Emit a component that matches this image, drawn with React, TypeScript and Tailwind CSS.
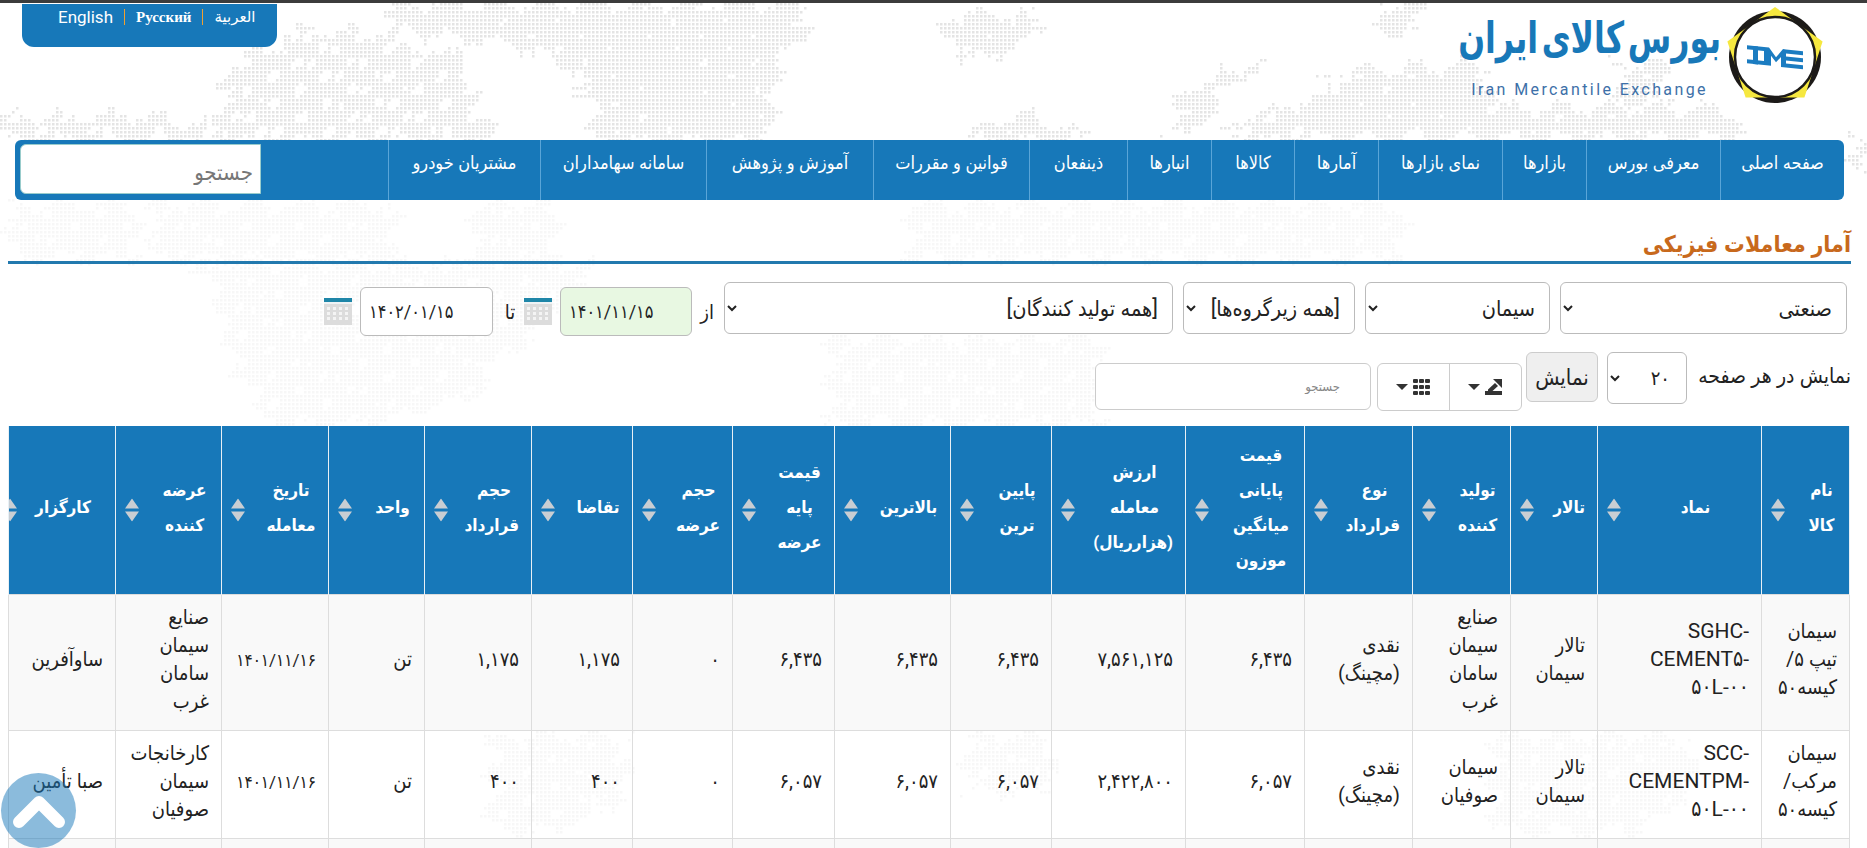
import { ReactNode } from "react"

const navItems = [
  { label: "صفحه اصلی", w: "w-[124px]" },
  { label: "معرفی بورس", w: "w-[134px]" },
  { label: "بازارها", w: "w-[84px]" },
  { label: "نمای بازارها", w: "w-[124px]" },
  { label: "آمارها", w: "w-[84px]" },
  { label: "کالاها", w: "w-[83px]" },
  { label: "انبارها", w: "w-[84px]" },
  { label: "ذینفعان", w: "w-[98px]" },
  { label: "قوانین و مقررات", w: "w-[156px]" },
  { label: "آموزش و پژوهش", w: "w-[167px]" },
  { label: "سامانه سهامداران", w: "w-[166px]" },
  { label: "مشتریان خودرو", w: "w-[152px]" },
]

const columns: { title: ReactNode; w: string; sortPos?: string; pr?: string }[] = [
  { title: <>نام<br />کالا</>, w: "w-[88px]" },
  { title: "نماد", w: "w-[164px]" },
  { title: "تالار", w: "w-[87px]" },
  { title: <>تولید<br />کننده</>, w: "w-[98px]" },
  { title: <>نوع<br />قرارداد</>, w: "w-[108px]" },
  { title: <>قیمت<br />پایانی<br />میانگین<br />موزون</>, w: "w-[119px]" },
  { title: <>ارزش<br />معامله<br />(هزارریال)</>, w: "w-[134px]" },
  { title: <>پایین<br />ترین</>, w: "w-[101px]" },
  { title: "بالاترین", w: "w-[116px]" },
  { title: <>قیمت<br />پایه<br />عرضه</>, w: "w-[102px]" },
  { title: <>حجم<br />عرضه</>, w: "w-[100px]" },
  { title: "تقاضا", w: "w-[101px]" },
  { title: <>حجم<br />قرارداد</>, w: "w-[107px]" },
  { title: "واحد", w: "w-[96px]" },
  { title: <>تاریخ<br />معامله</>, w: "w-[107px]" },
  { title: <>عرضه<br />کننده</>, w: "w-[106px]" },
  { title: "کارگزار", w: "w-[107px]", sortPos: "left-[-6px]", pr: "pr-[24px]" },
]

const Latin = ({ lines }: { lines: string[] }) => (
  <>
    {lines.map((l) => (
      <div key={l} dir="ltr" className="text-right text-[21px]">{l}</div>
    ))}
  </>
)

const Num = ({ v }: { v: string }) => <span className="text-[20px] tracking-[0.5px]">{v}</span>
const Dt = ({ v }: { v: string }) => <span className="text-[17px]">{v}</span>

const rows: ReactNode[][] = [
  [
    <>سیمان<br />تیپ ۵/<br />کیسه۵۰</>,
    <Latin lines={["SGHC-", "CEMENT۵-", "۵۰L-۰۰"]} />,
    <>تالار<br />سیمان</>,
    <>صنایع<br />سیمان<br />سامان<br />غرب</>,
    <>نقدی<br />(مچینگ)</>,
    <Num v="۶,۴۳۵" />, <Num v="۷,۵۶۱,۱۲۵" />, <Num v="۶,۴۳۵" />, <Num v="۶,۴۳۵" />, <Num v="۶,۴۳۵" />,
    <Num v="۰" />, <Num v="۱,۱۷۵" />, <Num v="۱,۱۷۵" />, "تن", <Dt v="۱۴۰۱/۱۱/۱۶" />,
    <>صنایع<br />سیمان<br />سامان<br />غرب</>,
    "ساوآفرین",
  ],
  [
    <>سیمان<br />مرکب/<br />کیسه۵۰</>,
    <Latin lines={["SCC-", "CEMENTPM-", "۵۰L-۰۰"]} />,
    <>تالار<br />سیمان</>,
    <>سیمان<br />صوفیان</>,
    <>نقدی<br />(مچینگ)</>,
    <Num v="۶,۰۵۷" />, <Num v="۲,۴۲۲,۸۰۰" />, <Num v="۶,۰۵۷" />, <Num v="۶,۰۵۷" />, <Num v="۶,۰۵۷" />,
    <Num v="۰" />, <Num v="۴۰۰" />, <Num v="۴۰۰" />, "تن", <Dt v="۱۴۰۱/۱۱/۱۶" />,
    <>کارخانجات<br />سیمان<br />صوفیان</>,
    "صبا تأمین",
  ],
]

type Pt = [number, number]

const inPoly = (x: number, y: number, poly: Pt[]) => {
  let inside = false
  for (let i = 0, j = poly.length - 1; i < poly.length; j = i++) {
    const [xi, yi] = poly[i]
    const [xj, yj] = poly[j]
    if (yi > y !== yj > y && x < ((xj - xi) * (y - yi)) / (yj - yi) + xi) inside = !inside
  }
  return inside
}

// dotted continents: jitter the test point so the edges come out rough
const dotPath = (polys: Pt[][], holes: number) => {
  let d = ""
  for (let y = 3; y < 848; y += 4) {
    for (let x = 0; x < 1867; x += 4) {
      const jx = x + 9 * Math.sin(y * 0.17 + x * 0.03) + 4 * Math.sin(y * 0.61)
      const jy = y + 7 * Math.sin(x * 0.13) + 3 * Math.sin(x * 0.47)
      if (!polys.some((p) => inPoly(jx, jy, p))) continue
      const n = Math.sin(x * 0.11) * Math.sin(y * 0.23) + Math.sin(x * 0.37 + y * 0.19) * 0.5
      if (n > holes) continue
      d += `M${x} ${y}h2.5v2.500h-2.500z`
    }
  }
  return d
}

const denseMap = dotPath(
  [
    [[388, 3], [812, 3], [790, 50], [775, 70], [768, 140], [595, 140], [587, 90], [562, 62], [500, 40], [400, 30]],
    [[943, 13], [1035, 13], [1035, 25], [1000, 57], [970, 57], [943, 35]],
    [[1250, 57], [1260, 60], [1190, 133], [1167, 133], [1185, 90]],
    [[1375, 3], [1425, 3], [1416, 33], [1385, 33]],
    [[976, 125], [1020, 113], [1076, 130], [1076, 140], [976, 140]],
    [[1343, 70], [1488, 63], [1488, 107], [1734, 107], [1734, 137], [1300, 137], [1300, 107]],
    [[1618, 63], [1662, 63], [1662, 100], [1618, 100]],
    [[1850, 140], [1867, 140], [1867, 170], [1850, 170]],
  ],
  1.2
)

const sparseMap = dotPath(
  [
    [[300, 30], [388, 30], [388, 47], [460, 50], [490, 140], [214, 140], [228, 60]],
    [[9, 115], [134, 115], [214, 125], [214, 140], [0, 140], [0, 125]],
    [[1240, 120], [1300, 100], [1300, 140], [1230, 140]],
  ],
  0.6
)

const faintMap = dotPath(
  [
    [[9, 203], [134, 203], [134, 257], [9, 257]],
    [[152, 203], [393, 203], [393, 257], [152, 257]],
    [[473, 203], [553, 203], [553, 263], [473, 263]],
    [[196, 262], [590, 262], [590, 290], [500, 357], [473, 393], [375, 423], [268, 423], [232, 357], [214, 290]],
    [[910, 203], [1400, 203], [1400, 257], [910, 257]],
    [[830, 337], [1098, 337], [1098, 423], [830, 423]],
    [[490, 735], [624, 735], [624, 790], [560, 830], [490, 830]],
    [[966, 735], [1050, 735], [1050, 790], [966, 790]],
    [[1493, 735], [1692, 735], [1692, 780], [1640, 830], [1493, 830]],
  ],
  0.8
)

const WorldMap = () => (
  <svg className="absolute left-0 top-0" width="1867" height="848" aria-hidden="true">
    <path d={denseMap} fill="#e4e4e4" />
    <path d={sparseMap} fill="#e4e4e4" />
    <path d={faintMap} fill="#f7f7f7" />
  </svg>
)

const Logo = () => (
  <svg width="100" height="100" viewBox="0 0 100 100" className="shrink-0" aria-hidden="true">
    <circle cx="50" cy="50" r="46" fill="#1c1a18" />
    <polygon points="50,0 97.600,34.500 79.400,90.500 20.600,90.500 2.400,34.500" fill="#f6e83f" />
    <circle cx="50" cy="50" r="40" fill="#fff" stroke="#1c1a18" strokeWidth="2.500" />
    <g fill="#1b7cc1" transform="skewY(6) translate(0 -5)">
      <rect x="22" y="41" width="17" height="4" />
      <rect x="22" y="55" width="17" height="4" />
      <rect x="28" y="41" width="5" height="18" />
      <rect x="39" y="41" width="5" height="18" />
      <path d="M44 41L51 50L58 41H61V59H56V49L51 55L46 49V59H44Z" />
      <rect x="61" y="41" width="17" height="4" />
      <rect x="61" y="48" width="17" height="4" />
      <rect x="61" y="55" width="17" height="4" />
    </g>
  </svg>
)

const SortIcon = ({ pos }: { pos?: string }) => (
  <svg
    className={`absolute top-1/2 -translate-y-1/2 ${pos ?? "left-[9px]"}`}
    width="14"
    height="23"
    viewBox="0 0 14 23"
    aria-hidden="true"
  >
    <polygon points="7,0 14,10 0,10" fill="#c9ced3" />
    <polygon points="0,13 14,13 7,23" fill="#c9ced3" />
  </svg>
)

const CalendarIcon = () => (
  <svg width="28" height="27" viewBox="0 0 28 27" className="shrink-0" aria-hidden="true">
    <rect width="28" height="27" fill="#dcdcdc" />
    <rect width="28" height="4" fill="#1f86a8" />
    <rect y="4" width="28" height="2" fill="#eef3f5" />
    {[9, 14, 19].map((y) =>
      [3, 9, 15, 21].map((x) => <rect key={`${x}-${y}`} x={x} y={y} width="3" height="3" fill="#f4f4f4" />)
    )}
  </svg>
)

const Caret = () => (
  <svg width="12" height="6" viewBox="0 0 12 6" aria-hidden="true">
    <polygon points="0,0 12,0 6,6" fill="#333" />
  </svg>
)

const Select = ({ value, w }: { value: string; w: string }) => (
  <select
    defaultValue={value}
    className={`${w} h-[52px] shrink-0 rounded-md border border-[#bbb] bg-white pl-2 pr-[10px] text-[21.5px] text-[#222]`}
  >
    <option>{value}</option>
  </select>
)

export default function App() {
  return (
    <div
      dir="rtl"
      className="relative h-[848px] w-[1867px] overflow-hidden bg-white font-['Roboto','DejaVu_Sans_Condensed','DejaVu_Sans',sans-serif] text-[20px] text-[#222]"
    >
      <WorldMap />
      <div className="relative h-[3px] bg-[#3c3c3c]" />

      <div className="relative flex h-[137px] items-start justify-between">
        <div className="mr-[42px] mt-[4px] flex items-start">
          <Logo />
          <div className="mr-[4px] mt-[3px] flex flex-col items-center">
            <div className="scale-y-[1.25] text-[35px] font-bold leading-[58px] text-[#1878b8] [word-spacing:-5px]">بورس کالای ایران</div>
            <div dir="ltr" className="mt-[12px] text-[16px] leading-[20px] tracking-[2.4px] text-[#3d70a8]">
              Iran Mercantile Exchange
            </div>
          </div>
        </div>
        <div
          dir="ltr"
          className="ml-[22px] mt-[1px] flex h-[43px] w-[255px] items-start gap-[11px] rounded-b-xl bg-[#1778b9] pl-[36px] pt-[2px] text-white"
        >
          <span className="text-[17px] leading-[22px]">English</span>
          <span className="h-[16px] w-px translate-y-[3px] bg-[#f0a030]" />
          <span className="font-['Liberation_Serif',serif] text-[15px] font-bold leading-[22px]">Русский</span>
          <span className="h-[16px] w-px translate-y-[3px] bg-[#f0a030]" />
          <span className="font-['Liberation_Serif','DejaVu_Sans',serif] text-[15px] leading-[22px]">العربية</span>
        </div>
      </div>

      <nav className="relative mr-[23px] flex h-[60px] w-[1829px] items-stretch rounded-md bg-[#1778b9] text-white">
        {navItems.map((item) => (
          <a
            key={item.label}
            href="#"
            className={`${item.w} flex shrink-0 justify-center whitespace-nowrap border-l border-[#5aa5d8] pt-[12px] text-[18px] leading-[22px]`}
          >
            {item.label}
          </a>
        ))}
        <div className="mr-auto p-[4px] pl-[5px]">
          <input
            placeholder="جستجو"
            className="h-[50px] w-[241px] rounded-l-md border border-[#9cc] bg-white px-[7px] pt-[6px] text-[22px] placeholder:text-[#777]"
          />
        </div>
      </nav>

      <main className="relative mr-[16px] w-[1843px]">
        <h1 className="mt-[30px] h-[34px] border-b-[3px] border-[#2279ae] text-[23px] font-bold leading-[30px] text-[#c8691c]">
          آمار معاملات فیزیکی
        </h1>

        <div className="mr-[4px] mt-[18px] flex items-start gap-[10px]">
          <Select value="صنعتی" w="w-[287px]" />
          <Select value="سیمان" w="w-[185px]" />
          <Select value="[همه زیرگروه‌ها]" w="w-[172px]" />
          <Select value="[همه تولید کنندگان]" w="w-[449px]" />
          <div className="flex items-center gap-[8px] pt-[5px]">
            <span className="w-[12px] text-center leading-[28px]">از</span>
            <div className="mr-[2px] flex h-[49px] w-[132px] items-center justify-end rounded-md border border-[#bbb] bg-[#e8f8e2] pl-[8px] text-[18px]">
              ۱۴۰۱/۱۱/۱۵
            </div>
            <CalendarIcon />
            <span className="w-[12px] text-center leading-[28px]">تا</span>
            <div className="mr-[3px] flex h-[49px] w-[133px] items-center justify-end rounded-md border border-[#bbb] bg-white pl-[8px] text-[18px]">
              ۱۴۰۲/۰۱/۱۵
            </div>
            <CalendarIcon />
          </div>
        </div>

        <div className="mt-[16px] flex items-start">
          <span className="mt-[12px] w-[164px] whitespace-nowrap text-[21px] leading-[24px]">نمایش در هر صفحه</span>
          <select
            defaultValue="۲۰"
            className="h-[52px] w-[80px] shrink-0 rounded-md border border-[#bbb] bg-white px-3 text-[20px]"
          >
            <option>۲۰</option>
          </select>
          <button className="mr-[9px] h-[50px] w-[72px] shrink-0 rounded-md border border-[#ccc] bg-[#efefef] text-[22px] text-[#222]">
            نمایش
          </button>
          <div dir="ltr" className="mr-[4px] mt-[11px] flex h-[48px] w-[145px] shrink-0 rounded-md border border-[#ccc] bg-white">
            <div className="order-first flex w-[72px] items-center justify-center gap-[5px] border-r border-[#ccc]">
              <Caret />
              <svg width="17" height="16" viewBox="0 0 17 16" aria-hidden="true">
                {[0, 6, 12].map((y) =>
                  [0, 6, 12].map((x) => <rect key={`${x}-${y}`} x={x} y={y} width="5" height="4" rx="1" fill="#333" />)
                )}
              </svg>
            </div>
            <div className="flex w-[72px] items-center justify-center gap-[5px]">
              <Caret />
              <svg width="17" height="16" viewBox="0 0 17 16" aria-hidden="true">
                <path d="M0 12H17V16H0Z" fill="#333" />
                <path d="M8 0H17V9Z" fill="#333" />
                <path d="M10 4L13 7L7.500 12H3V10.500Z" fill="#333" />
              </svg>
            </div>
          </div>
          <input
            placeholder="جستجو"
            className="mr-[6px] mt-[11px] h-[47px] w-[276px] shrink-0 rounded-md border border-[#ccc] bg-white pl-[20px] pr-[30px] text-[13px] placeholder:text-[#888]"
          />
        </div>
      </main>

      <table className="relative mr-[17px] mt-[15px] w-[1841px] table-fixed border-collapse">
        <colgroup>
          {columns.map((c, i) => (
            <col key={i} className={c.w} />
          ))}
        </colgroup>
        <thead>
          <tr className="h-[168px] bg-[#1778b9] text-white">
            {columns.map((c, i) => (
              <th
                key={i}
                className={`relative overflow-hidden border border-y-0 border-[#e8f0f5] pb-[4px] pl-[44px] text-center text-[17px] font-bold leading-[35px] ${c.pr ?? "pr-[12px]"}`}
              >
                {c.title}
                <SortIcon pos={c.sortPos} />
              </th>
            ))}
          </tr>
        </thead>
        <tbody>
          {rows.map((row, r) => (
            <tr key={r} className={r === 0 ? "h-[136px] bg-[#f9f9f9]" : "h-[108px]"}>
              {row.map((cell, i) => (
                <td key={i} className="border border-[#ddd] px-[12px] pb-[12px] pt-[6px] text-right align-middle text-[20px] leading-[28px]">
                  {cell}
                </td>
              ))}
            </tr>
          ))}
          <tr className="h-[60px] bg-[#f9f9f9]">
            {columns.map((_, i) => (
              <td key={i} className="border border-[#ddd]" />
            ))}
          </tr>
        </tbody>
      </table>

      <a
        href="#"
        className="absolute left-[1px] top-[773px] flex h-[75px] w-[75px] items-center justify-center rounded-full bg-[#1778b9]/50"
      >
        <svg width="52" height="36" viewBox="0 0 52 36" aria-hidden="true">
          <path d="M6 29L26 9L46 29" fill="none" stroke="#fff" strokeWidth="12" strokeLinejoin="round" strokeLinecap="round" />
        </svg>
      </a>
    </div>
  )
}
